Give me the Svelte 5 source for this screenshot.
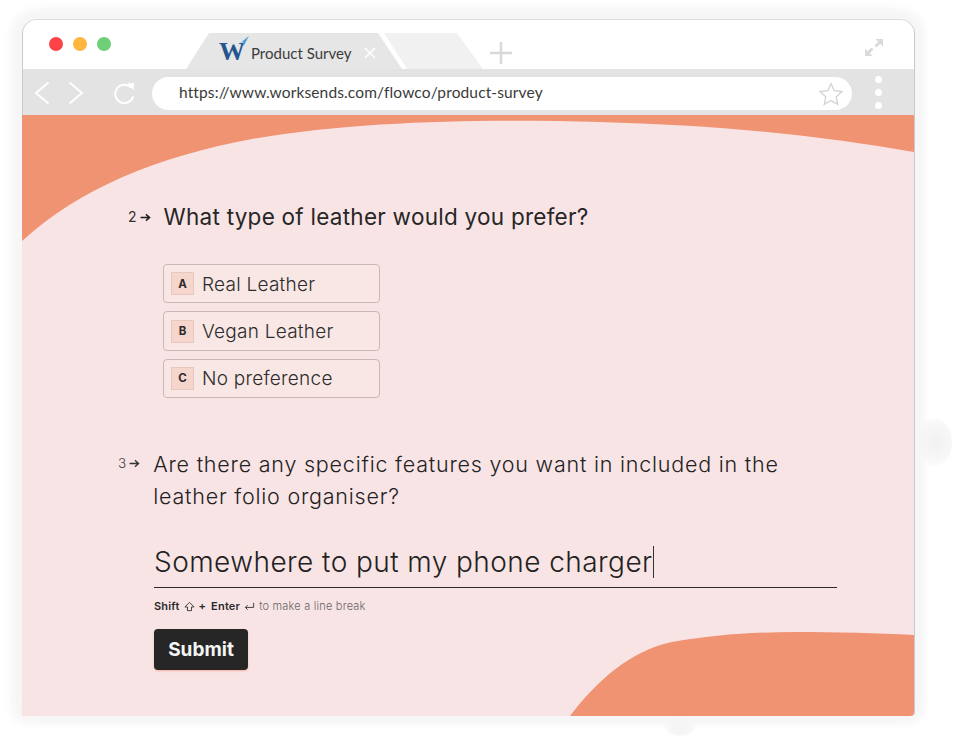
<script>
  const options = [
    { key: 'A', label: 'Real Leather' },
    { key: 'B', label: 'Vegan Leather' },
    { key: 'C', label: 'No preference' }
  ];
</script>

<div class="stage">
  <span class="smudge right"></span>
  <span class="smudge bottom"></span>
  <div class="frame">
    <header class="tabbar">
      <div class="lights">
        <span class="light red"></span>
        <span class="light amber"></span>
        <span class="light green"></span>
      </div>
      <div class="tab active">
        <span class="logo">W<svg class="logo-arrow" viewBox="0 0 14 12"><path d="M0.5 11 L13 1 L7.5 11 L6.5 6.5 Z" fill="#4b9cd6"/></svg></span>
        <span class="tab-title">Product Survey</span>
        <svg class="tab-close" viewBox="0 0 12 12"><path d="M1 1 L11 11 M11 1 L1 11" stroke="#fff" stroke-width="1.6" fill="none"/></svg>
      </div>
      <div class="tab ghost"></div>
      <svg class="plus" viewBox="0 0 22 22"><path d="M11 0 V22 M0 11 H22" stroke="#d9d9d9" stroke-width="2.6" fill="none"/></svg>
      <svg class="expand" viewBox="0 0 20 20">
        <path d="M11.5 1 H19 V8.5 Z M1 18 V10.5 L8.5 18 Z" fill="#dadada"/>
        <path d="M15.5 4.5 L11.5 8.5 M4.5 14.5 L8.5 10.5" stroke="#dadada" stroke-width="3" fill="none"/>
      </svg>
    </header>

    <nav class="toolbar">
      <svg class="nav-icon back" viewBox="0 0 16 24"><path d="M14.5 1.5 L2 12 L14.5 22.5" stroke="#fff" stroke-width="2" fill="none"/></svg>
      <svg class="nav-icon forward" viewBox="0 0 16 24"><path d="M1.5 1.5 L14 12 L1.5 22.5" stroke="#fff" stroke-width="2" fill="none"/></svg>
      <svg class="reload" viewBox="0 0 24 24"><path d="M19 6.5 A10 10 0 1 0 21 15.5" stroke="#fff" stroke-width="2.2" fill="none"/><path d="M14.5 1.5 L22 1 L21.5 9 Z" fill="#fff"/></svg>
      <div class="address">
        <span class="url">https://www.worksends.com/flowco/product-survey</span>
        <svg class="star" viewBox="0 0 24 24"><path d="M12 1.6 L15.2 8.7 L23 9.5 L17.2 14.7 L18.8 22.4 L12 18.5 L5.2 22.4 L6.8 14.7 L1 9.5 L8.8 8.7 Z" stroke="#d2d2d2" stroke-width="1.3" fill="none"/></svg>
      </div>
      <div class="kebab"><span></span><span></span><span></span></div>
    </nav>

    <main class="page">
      <svg class="blob" viewBox="0 0 892 601" preserveAspectRatio="none">
        <path d="M0 0 H892 V37 C790 19 690 10 577 7 C470 4 340 5 230 24 C135 42 60 72 0 126 Z" fill="#f09373"/>
        <path d="M548 601 C575 565 610 535 650 527 C690 520 730 517 774 517 C815 517 855 518 892 520 V601 Z" fill="#f09373"/>
      </svg>

      <section class="question two">
        <div class="q-head">
          <span class="num">2</span>
          <svg class="arrow" viewBox="0 0 12 10"><path d="M0.5 5 H10 M6.5 1.5 L10.5 5 L6.5 8.5" stroke="#1f1f1f" stroke-width="1.7" fill="none"/></svg>
          <h2>What type of leather would you prefer?</h2>
        </div>
        <ul class="options">
          {#each options as o}
            <li class="option"><span class="key">{o.key}</span><span class="label">{o.label}</span></li>
          {/each}
        </ul>
      </section>

      <section class="question three">
        <div class="q-head">
          <span class="num small">3</span>
          <svg class="arrow" viewBox="0 0 12 10"><path d="M0.5 5 H10 M6.5 1.5 L10.5 5 L6.5 8.5" stroke="#333" stroke-width="1.5" fill="none"/></svg>
          <h2 class="light-q">Are there any specific features you want in included in the leather folio organiser?</h2>
        </div>
        <div class="answer"><span>Somewhere to put my phone charger</span><i class="caret"></i></div>
        <p class="hint">
          <b>Shift</b>
          <svg class="hint-icon" viewBox="0 0 12 12"><path d="M6 1.5 L11 6.5 H8.2 V10.5 H3.8 V6.5 H1 Z" stroke="#333" stroke-width="1" fill="none"/></svg>
          <b class="sep">+ Enter</b>
          <svg class="hint-icon" viewBox="0 0 12 12"><path d="M10.5 2 V7 H1.5 M4 4.5 L1.5 7 L4 9.5" stroke="#333" stroke-width="1" fill="none"/></svg>
          <span>to make a line break</span>
        </p>
        <button class="submit">Submit</button>
      </section>
    </main>
  </div>
</div>

<style>
  :global(body) {
    margin: 0;
    background: #fff;
  }
  .stage {
    position: relative;
    width: 959px;
    height: 740px;
    padding: 20px 45px 24px 23px;
    box-sizing: border-box;
    overflow: hidden;
  }
  .smudge {
    position: absolute;
    border-radius: 50%;
    background: radial-gradient(circle, #f1f1f1 0%, #f7f7f7 55%, #fff 100%);
  }
  .smudge.right { left: 918px; top: 418px; width: 34px; height: 48px; }
  .smudge.bottom { left: 664px; top: 712px; width: 32px; height: 24px; }
  .frame {
    position: relative;
    display: flex;
    flex-direction: column;
    width: 891px;
    height: 696px;
    border-radius: 14px 14px 4px 4px;
    background: #fff;
    box-shadow:
      0 -1px 0 #dddddd,
      -1px 0 0 #c9c9c9,
      1px 0 0 #c9c9c9,
      0 -5px 12px 6px #f6f6f6,
      -5px 0 12px 6px #f6f6f6,
      5px 0 12px 4px #f6f6f6;
  }
  .tabbar {
    display: flex;
    align-items: flex-end;
    height: 49px;
    flex: none;
    padding-left: 26px;
    border-radius: 14px 14px 0 0;
  }
  .lights {
    display: flex;
    gap: 10px;
    align-self: flex-start;
    margin-top: 17px;
  }
  .light { width: 14px; height: 14px; border-radius: 50%; }
  .red { background: #fc4348; }
  .amber { background: #ffb63f; }
  .green { background: #6ecf77; }
  .tab { height: 36px; flex: none; }
  .tab.active {
    display: flex;
    align-items: center;
    width: 216px;
    margin-left: 75px;
    padding-left: 33px;
    box-sizing: border-box;
    background: #e6e6e6;
    clip-path: polygon(0 100%, 23px 0, 192px 0, 100% 100%);
  }
  .tab.ghost {
    width: 99px;
    margin-left: -18px;
    background: #f1f1f1;
    clip-path: polygon(0 0, 73px 0, 100% 100%, 23px 100%);
  }
  .logo {
    position: relative;
    font: 700 26px/30px "Liberation Serif", serif;
    color: #24558f;
    width: 32px;
    margin-top: 2px;
    letter-spacing: -1px;
  }
  .logo-arrow {
    position: absolute;
    left: 17px;
    top: -2px;
    width: 14px;
    height: 12px;
  }
  .tab-title {
    font: 400 15px/20px Lato, sans-serif;
    color: #3c3c3c;
    margin-top: 4px;
  }
  .tab-close {
    width: 12px;
    height: 12px;
    margin-left: 13px;
    margin-top: 3px;
  }
  .plus {
    width: 22px;
    height: 22px;
    margin-left: 7px;
    margin-bottom: 5px;
    flex: none;
  }
  .expand {
    width: 20px;
    height: 20px;
    margin-left: auto;
    margin-right: 30px;
    margin-bottom: 11px;
    flex: none;
  }
  .toolbar {
    display: flex;
    align-items: center;
    height: 46px;
    flex: none;
    background: #e3e3e3;
    padding-left: 11px;
    box-sizing: border-box;
  }
  .nav-icon { width: 16px; height: 24px; flex: none; margin-top: 2px; }
  .forward { margin-left: 18px; }
  .reload { width: 22px; height: 22px; margin-left: 30px; margin-top: 2px; flex: none; }
  .address {
    display: flex;
    align-items: center;
    justify-content: space-between;
    width: 700px;
    height: 33px;
    margin-left: 16px;
    margin-top: 3px;
    padding: 0 9px 0 27px;
    box-sizing: border-box;
    background: #fff;
    border-radius: 17px;
  }
  .url {
    font: 400 15.5px/20px Lato, sans-serif;
    color: #3a3a3a;
    letter-spacing: 0.13px;
    margin-top: -3px;
  }
  .star { width: 24px; height: 24px; flex: none; }
  .kebab {
    display: flex;
    flex-direction: column;
    gap: 6px;
    margin-left: 23px;
    margin-top: 1px;
  }
  .kebab span { width: 7px; height: 7px; border-radius: 50%; background: #fff; }
  .page {
    position: relative;
    flex: 1;
    margin-left: -1px;
    background: #f9e4e5;
    font-family: Inter, sans-serif;
    color: #262626;
    border-radius: 0 0 4px 0;
    overflow: hidden;
  }
  .blob {
    position: absolute;
    inset: 0;
    width: 100%;
    height: 100%;
  }
  .question { position: relative; }
  .q-head { display: flex; align-items: flex-start; }
  .num { font-size: 14px; line-height: 22px; color: #333; margin-top: 0; }
  .arrow { width: 11px; height: 9px; margin: 7px 0 0 3px; flex: none; }
  h2 { margin: 0; font-weight: 400; }
  .two { padding: 91px 0 0 106px; }
  .two h2 {
    font-size: 22.5px;
    line-height: 30px;
    margin-left: 13px;
    letter-spacing: 0.26px;
    margin-top: -4px;
    color: #262626;
  }
  .options {
    list-style: none;
    margin: 32px 0 0 35px;
    padding: 0;
    display: flex;
    flex-direction: column;
    gap: 8px;
    width: 217px;
  }
  .option {
    display: flex;
    align-items: center;
    height: 39.4px;
    box-sizing: border-box;
    padding-left: 7px;
    border: 1px solid #cbb7b6;
    border-radius: 4px;
    background: #f8e7e5;
  }
  .key {
    display: flex;
    align-items: center;
    justify-content: center;
    width: 23px;
    height: 23px;
    box-sizing: border-box;
    border: 1px solid #e8c8be;
    background: #f6d6cc;
    font-size: 11.5px;
    font-weight: 700;
    color: #2b2b2b;
  }
  .label {
    margin-left: 8px;
    margin-top: 1px;
    font-size: 19px;
    font-weight: 300;
    letter-spacing: 0.25px;
    color: #2c2c2c;
  }
  .three { padding: 51px 0 0 96px; }
  .three .q-head { position: relative; }
  .num.small { font-size: 13.5px; color: #444; margin-top: 3px; font-weight: 300; }
  .three .arrow { margin-top: 10px; }
  .three h2 {
    width: 660px;
    margin-left: 13px;
    font-size: 21.5px;
    line-height: 31.5px;
    font-weight: 300;
    letter-spacing: 0.78px;
    color: #222;
  }
  .answer {
    display: flex;
    align-items: center;
    width: 683px;
    height: 51px;
    margin: 24px 0 0 36px;
    border-bottom: 1.5px solid #2a2a2a;
    font-size: 28px;
    font-weight: 300;
    letter-spacing: 0.44px;
    color: #222;
    white-space: nowrap;
  }
  .caret { width: 1px; height: 32px; background: #333; margin-left: 0; }
  .hint {
    display: flex;
    align-items: center;
    gap: 4px;
    margin: 12px 0 0 36px;
    font-size: 11px;
    line-height: 13px;
    color: #666;
    font-weight: 300;
    letter-spacing: 0.2px;
  }
  .hint b { font-weight: 600; color: #2a2a2a; }
  .hint b.sep { word-spacing: 2px; }
  .hint-icon { width: 11px; height: 11px; flex: none; }
  .submit {
    display: block;
    width: 94px;
    height: 41px;
    margin: 16px 0 0 36px;
    padding: 0;
    border: none;
    border-radius: 4px;
    background: #262626;
    color: #f5f5f5;
    font: 700 19px/41px Inter, sans-serif;
    box-shadow: 0 1px 2px rgba(240, 147, 115, 0.6);
  }
</style>
